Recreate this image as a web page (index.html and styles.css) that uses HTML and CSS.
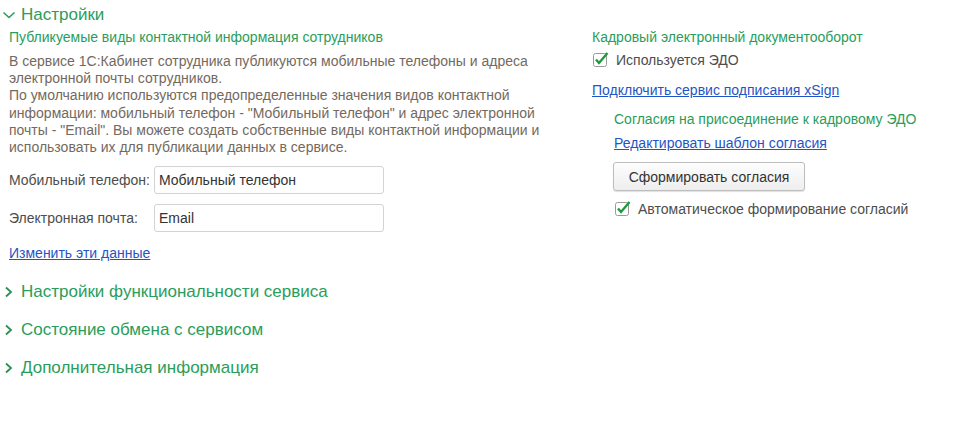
FILE: index.html
```html
<!DOCTYPE html>
<html lang="ru">
<head>
<meta charset="utf-8">
<title>Настройки</title>
<link rel="stylesheet" href="styles.css">
</head>
<body>
<div class="page">
  <div class="group-head open">
    <svg class="chev-down" width="14" height="10" viewBox="0 0 14 10"><path d="M1.5 2.5 L7 7.5 L12.5 2.5" fill="none" stroke="#2a9d5c" stroke-width="1.6"/></svg>
    <span class="group-title">Настройки</span>
  </div>

  <div class="panel">
    <div class="col-left">
      <div class="subtitle">Публикуемые виды контактной информация сотрудников</div>
      <p class="note">В сервисе 1С:Кабинет сотрудника публикуются мобильные телефоны и адреса электронной почты сотрудников.<br>По умолчанию используются предопределенные значения видов контактной информации: мобильный телефон - "Мобильный телефон" и адрес электронной почты - "Email". Вы можете создать собственные виды контактной информации и использовать их для публикации данных в сервисе.</p>
      <div class="fields">
        <span class="label">Мобильный телефон:</span>
        <div class="input">Мобильный телефон</div>
        <span class="label">Электронная почта:</span>
        <div class="input">Email</div>
      </div>
      <a class="link edit-link" href="#">Изменить эти данные</a>
    </div>

    <div class="col-right">
      <div class="subtitle">Кадровый электронный документооборот</div>
      <label class="check check-edo">
        <svg width="16" height="16" viewBox="0 0 16 16"><rect x="0.5" y="1.5" width="13" height="13" rx="2" fill="#fff" stroke="#9a9a9a"/><path d="M3 7.5 L6 11 L14.5 1" fill="none" stroke="#1e9a3c" stroke-width="2.4"/></svg>
        <span>Используется ЭДО</span>
      </label>
      <a class="link xsign" href="#">Подключить сервис подписания xSign</a>
      <div class="consent">
        <div class="subtitle">Согласия на присоединение к кадровому ЭДО</div>
        <a class="link template" href="#">Редактировать шаблон согласия</a>
        <button class="btn" type="button">Сформировать согласия</button>
        <label class="check check-auto">
          <svg width="16" height="16" viewBox="0 0 16 16"><rect x="0.5" y="1.5" width="13" height="13" rx="2" fill="#fff" stroke="#9a9a9a"/><path d="M3 7.5 L6 11 L14.5 1" fill="none" stroke="#1e9a3c" stroke-width="2.4"/></svg>
          <span>Автоматическое формирование согласий</span>
        </label>
      </div>
    </div>
  </div>

  <div class="collapsed">
    <div class="group-head">
      <svg class="chev-right" width="10" height="12" viewBox="0 0 10 12"><path d="M2 1.5 L7 6 L2 10.5" fill="none" stroke="#2a8f52" stroke-width="1.8"/></svg>
      <span class="group-title">Настройки функциональности сервиса</span>
    </div>
    <div class="group-head">
      <svg class="chev-right" width="10" height="12" viewBox="0 0 10 12"><path d="M2 1.5 L7 6 L2 10.5" fill="none" stroke="#2a8f52" stroke-width="1.8"/></svg>
      <span class="group-title">Состояние обмена с сервисом</span>
    </div>
    <div class="group-head">
      <svg class="chev-right" width="10" height="12" viewBox="0 0 10 12"><path d="M2 1.5 L7 6 L2 10.5" fill="none" stroke="#2a8f52" stroke-width="1.8"/></svg>
      <span class="group-title">Дополнительная информация</span>
    </div>
  </div>
</div>
</body>
</html>
```

FILE: styles.css
```css
html, body {
  margin: 0;
  padding: 0;
  background: #fff;
}

body {
  font-family: "Liberation Sans", Arial, sans-serif;
  font-size: 14px;
  color: #4d4d4d;
}

.page {
  width: 974px;
  height: 441px;
  overflow: hidden;
}

/* Group headers */
.group-head {
  display: flex;
  align-items: center;
  height: 28px;
  padding-left: 2px;
  gap: 5px;
}

.group-head.open {
  padding-top: 1px;
  height: 27px;
}

.group-head .chev-right {
  margin-left: 2px;
  margin-right: 2px;
}

.group-title {
  font-size: 17px;
  color: #2a9d5c;
}

/* Expanded panel */
.panel {
  display: flex;
  padding-left: 9px;
}

.col-left {
  width: 545px;
  display: flex;
  flex-direction: column;
  align-items: flex-start;
}

.col-right {
  margin-left: 38px;
  display: flex;
  flex-direction: column;
  align-items: flex-start;
}

.subtitle {
  color: #2a9d5c;
  line-height: 16px;
  margin-top: 1px;
}

.note {
  margin: 8px 0 0;
  line-height: 17.2px;
  color: #74695e;
}

.fields {
  display: grid;
  grid-template-columns: 145px 230px;
  row-gap: 10px;
  align-items: center;
  margin-top: 10px;
}

.label {
  color: #4d4d4d;
}

.input {
  height: 26px;
  line-height: 26px;
  border: 1px solid #d3d3d3;
  border-radius: 3px;
  padding: 0 4px;
  color: #333;
}

.link {
  color: #1f55c4;
  text-decoration: underline;
  line-height: 16px;
}

.edit-link {
  margin-top: 13px;
}

/* Right column */
.check {
  display: flex;
  align-items: center;
  gap: 7px;
  line-height: 16px;
  color: #4d4d4d;
}

.check svg {
  flex: none;
}

.check-edo {
  margin-top: 7px;
  margin-left: 1px;
}

.xsign {
  margin-top: 14px;
}

.consent {
  margin-left: 22px;
  margin-top: 13px;
  display: flex;
  flex-direction: column;
  align-items: flex-start;
}

.consent .subtitle {
  margin-top: 0;
}

.template {
  margin-top: 8px;
}

.btn {
  margin-top: 11px;
  margin-left: -1px;
  width: 192px;
  height: 29px;
  font-family: inherit;
  font-size: 14px;
  color: #333;
  background: linear-gradient(#fdfdfd, #eeeeee);
  border: 1px solid #bdbdbd;
  border-radius: 3px;
  box-shadow: 0 1px 1px rgba(0, 0, 0, 0.12);
  padding: 0;
}

.check-auto {
  margin-top: 10px;
  margin-left: 1px;
}

/* Collapsed groups */
.collapsed {
  margin-top: 17px;
  display: flex;
  flex-direction: column;
  gap: 10px;
}
```
